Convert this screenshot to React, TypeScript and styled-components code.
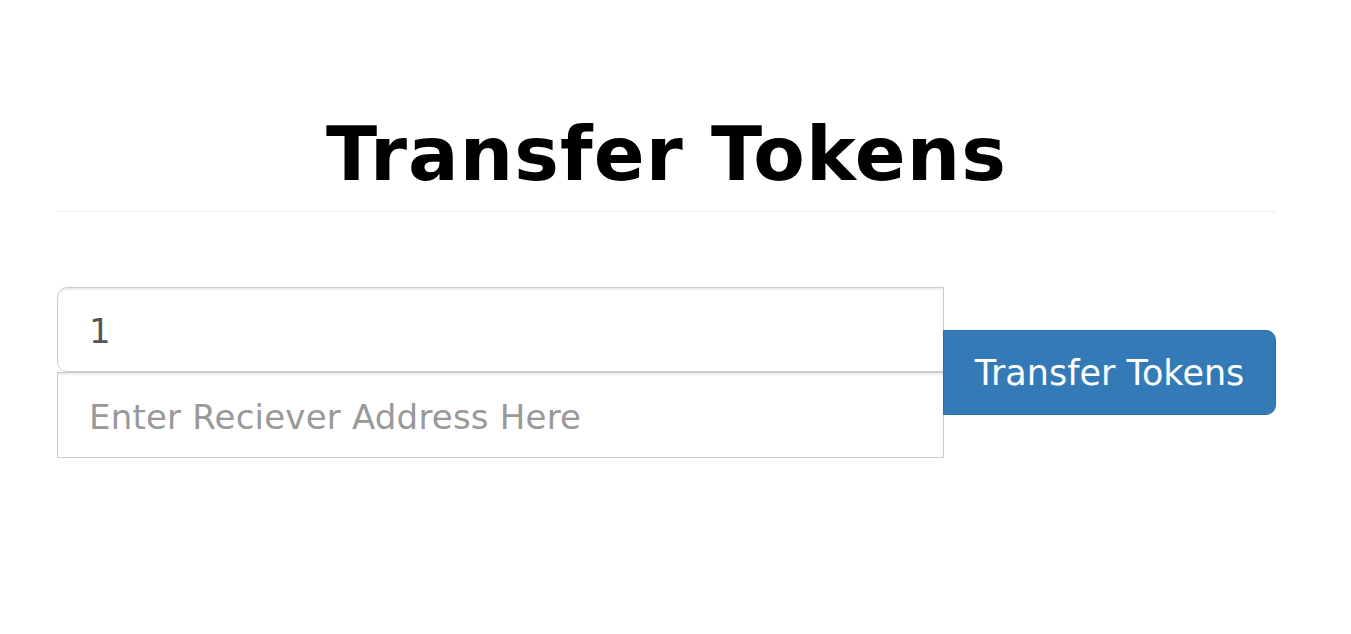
import React from "react";
import styled, { createGlobalStyle } from "styled-components";

const GlobalStyle = createGlobalStyle`
  html, body { margin: 0; padding: 0; background: #fff; }
  body { font-family: "DejaVu Sans", Verdana, sans-serif; color: #333; }
  * { box-sizing: border-box; }
`;

const Container = styled.div`
  padding: 113px 75px 0 57px;
`;

const Title = styled.h2`
  margin: 0;
  font-size: 75px;
  line-height: 1.1;
  font-weight: 700;
  letter-spacing: 1.1px;
  text-align: center;
  color: #000;
`;

const Rule = styled.hr`
  margin: 15px 0 0;
  border: 0;
  border-top: 1px solid #eee;
`;

const InputGroup = styled.div`
  display: flex;
  align-items: center;
  margin-top: 75px;
`;

const Fields = styled.div`
  display: flex;
  flex-direction: column;
  width: 887px;
`;

const Field = styled.input<{ $rounded?: boolean }>`
  display: block;
  margin: 0;
  height: ${(p) => (p.$rounded ? "85px" : "86px")};
  width: 100%;
  padding: 17px 31px 13px;
  font-family: "DejaVu Sans", Verdana, sans-serif;
  font-size: 34px;
  letter-spacing: 0.2px;
  color: #555;
  background: #fff;
  border: 1px solid #ccc;
  border-radius: ${(p) => (p.$rounded ? "10px 0 0 10px" : "0")};
  box-shadow: inset 0 2px 2px rgba(0, 0, 0, 0.075);
  outline: none;
  &::placeholder { color: #999; opacity: 1; }
`;

const Button = styled.button`
  flex: 1;
  margin: 0 0 0 -1px;
  height: 85px;
  padding: 16px 30px 14px;
  font-family: "DejaVu Sans", Verdana, sans-serif;
  font-size: 35px;
  color: #fff;
  background: #337ab7;
  border: 1px solid #2e6da4;
  border-radius: 0 10px 10px 0;
  white-space: nowrap;
  cursor: pointer;
`;

export default function App() {
  return (
    <>
      <GlobalStyle />
      <Container>
        <Title>Transfer Tokens</Title>
        <Rule />
        <InputGroup>
          <Fields>
            <Field $rounded type="text" defaultValue="1" />
            <Field type="text" placeholder="Enter Reciever Address Here" />
          </Fields>
          <Button type="button">Transfer Tokens</Button>
        </InputGroup>
      </Container>
    </>
  );
}
